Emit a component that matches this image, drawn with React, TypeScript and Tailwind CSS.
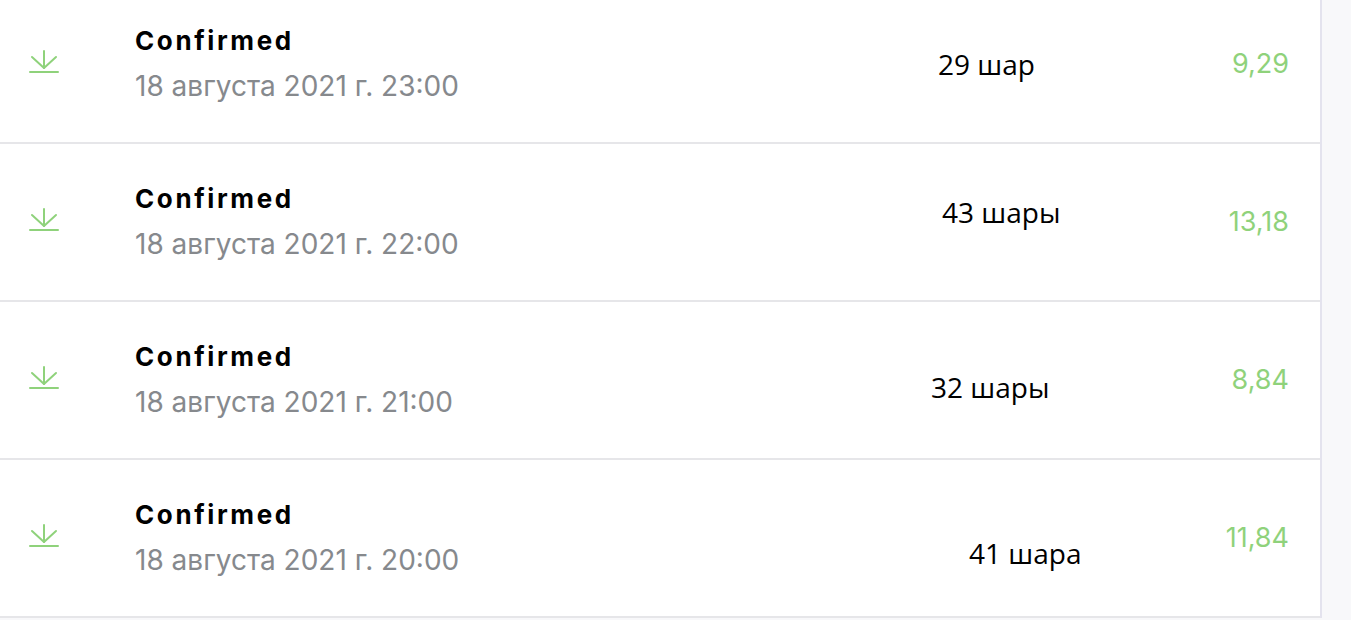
import React from 'react';

type Tx = {
  date: string;
  label: string;
  labelClass: string;
  amount: string;
};

const rows: Tx[] = [
  { date: '18 августа 2021 г. 23:00', label: '29 шар', labelClass: 'ml-[457px] pb-[1px]', amount: '9,29' },
  { date: '18 августа 2021 г. 22:00', label: '43 шары', labelClass: 'ml-[461px] pb-[21px]', amount: '13,18' },
  { date: '18 августа 2021 г. 21:00', label: '32 шары', labelClass: 'ml-[450px] pt-[13px]', amount: '8,84' },
  { date: '18 августа 2021 г. 20:00', label: '41 шара', labelClass: 'ml-[488px] pt-[29px]', amount: '11,84' },
];

const DownloadIcon: React.FC = () => (
  <svg width="30" height="24" viewBox="0 0 30 24" fill="none" stroke="#8fd27b" strokeWidth="2" strokeLinecap="round">
    <path d="M15 1 V18" />
    <path d="M3 7 L15 18 L27 7" strokeLinejoin="round" />
    <path d="M1 22 H29" />
  </svg>
);

const Row: React.FC<{ tx: Tx }> = ({ tx }) => (
  <div className="flex items-center h-[158px] border-b-2 border-[#e6e6e9] bg-white">
    <div className="w-[135px] shrink-0 pl-[29px] pb-[4px]">
      <DownloadIcon />
    </div>
    <div className="w-[346px] shrink-0 flex flex-col" style={{ fontFamily: 'Inter, sans-serif' }}>
      <span className="text-[26px] font-bold text-black leading-[30px] tracking-[2.6px]">Confirmed</span>
      <span className="text-[28px] text-[#86898d] leading-[34px] mt-[13px]">{tx.date}</span>
    </div>
    <div className={'shrink-0 text-[28px] text-black leading-[34px] ' + tx.labelClass} style={{ fontFamily: '"Open Sans", sans-serif' }}>
      {tx.label}
    </div>
    <div className="flex-1 text-right pr-[31px] text-[27px] text-[#8fd27b]" style={{ fontFamily: 'Inter, sans-serif' }}>
      {tx.amount}
    </div>
  </div>
);

export default function App() {
  return (
    <div className="w-[1351px] h-[620px] overflow-hidden bg-[#f8f8fa]">
      <div className="w-[1322px] -mt-[14px] border-r-2 border-[#e4e3ee] bg-white">
        {rows.map((tx) => (
          <Row key={tx.date} tx={tx} />
        ))}
      </div>
    </div>
  );
}
